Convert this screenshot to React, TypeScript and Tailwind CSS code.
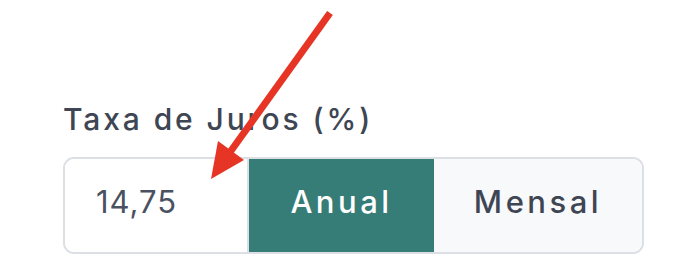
import { useState } from "react";

export default function App() {
  const [rate, setRate] = useState("14,75");
  const [period, setPeriod] = useState<"anual" | "mensal">("anual");

  return (
    <main className="relative h-[278px] w-[688px] overflow-hidden bg-white pl-[63px] pt-[99px] font-['Inter',sans-serif] text-[#3e4553]">
      <label className="block text-[30px] font-medium leading-[40px] tracking-[2.9px]">Taxa de Juros (%)</label>

      <div className="mt-[18px] flex h-[97px] w-[581px] overflow-hidden rounded-[11px] border-2 border-[#dcdfe3]">
        <div className="flex w-[184px] items-center border-r-2 border-[#dcdfe3] bg-white pb-[6px] pl-[31px]">
          <input
            value={rate}
            onChange={(e) => setRate(e.target.value)}
            className="w-full bg-transparent text-[31px] tracking-[1px] text-[#4a5160] outline-none"
          />
        </div>
        <button
          onClick={() => setPeriod("anual")}
          className={`w-[185px] pb-[6px] text-[31px] font-medium tracking-[3.5px] ${period === "anual" ? "bg-[#367c77] text-white" : "bg-[#f8f9fa] text-[#3e4553]"}`}
        >
          Anual
        </button>
        <button
          onClick={() => setPeriod("mensal")}
          className={`flex-1 pb-[6px] text-[31px] font-medium tracking-[3.5px] ${period === "mensal" ? "bg-[#367c77] text-white" : "bg-[#f8f9fa] text-[#3e4553]"}`}
        >
          Mensal
        </button>
      </div>

      {/* annotation arrow */}
      <svg className="pointer-events-none absolute left-0 top-0" width="688" height="278" viewBox="0 0 688 278">
        <line x1="330" y1="13" x2="228" y2="155" stroke="#e63525" strokeWidth="7" />
        <polygon points="211,179 244,160 218,141" fill="#e63525" />
      </svg>
    </main>
  );
}
